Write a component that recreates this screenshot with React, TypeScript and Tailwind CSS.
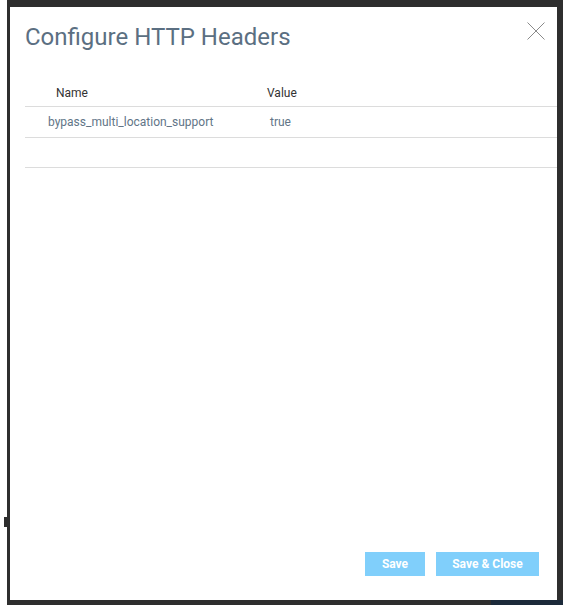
const headers = [{ name: "bypass_multi_location_support", value: "true" }];

export default function App() {
  return (
    <div className="h-[605px] w-[563px] bg-white font-['Roboto',sans-serif]">
      <div className="relative ml-[7px] h-full bg-[#2e2e2e] pb-[5px] pl-[3px] pr-[6px] pt-[7px]">
        {/* underlying page bits peeking out */}
        <div className="absolute bottom-0 right-0 h-[5px] w-[72px] bg-[#1c2a3a]" />
        <div className="absolute left-[-3px] top-[517px] h-[10px] w-[3px] bg-[#2e2e2e]" />

        <div className="relative flex h-full flex-col bg-white">
          <button type="button" className="absolute right-[12px] top-[15px]">
            <svg width="18" height="18" viewBox="0 0 18 18" className="block">
              <path d="M0.5 0.5 L17.5 17.5 M17.5 0.5 L0.5 17.5" stroke="#8a8a8a" strokeWidth="1" fill="none" />
            </svg>
          </button>

          <h1 className="pl-[15px] pt-[14px] text-[24px] leading-[32px] font-normal text-[#5b6f82]">
            Configure HTTP Headers
          </h1>

          <div className="mt-[31px] ml-[15px]">
            <div className="flex h-[23px] items-start border-b border-[#dcdcdc] text-[12px] text-[#333]">
              <div className="w-[212px] pl-[31px]">Name</div>
              <div className="pl-[30px]">Value</div>
            </div>
            {headers.map((h) => (
              <div key={h.name} className="flex h-[31px] items-center border-b border-[#dcdcdc] text-[12px] text-[#627587]">
                <div className="w-[212px] pl-[23px]">{h.name}</div>
                <div className="pl-[33px]">{h.value}</div>
              </div>
            ))}
            <div className="h-[30px] border-b border-[#dcdcdc]" />
          </div>

          <div className="mt-auto flex justify-end gap-[11px] pb-[24px] pr-[18px]">
            <button type="button" className="h-[24px] w-[60px] bg-[#80cffb] text-[12px] font-bold text-white">
              Save
            </button>
            <button type="button" className="h-[24px] w-[103px] bg-[#80cffb] text-[12px] font-bold text-white">
              Save &amp; Close
            </button>
          </div>
        </div>
      </div>
    </div>
  );
}
